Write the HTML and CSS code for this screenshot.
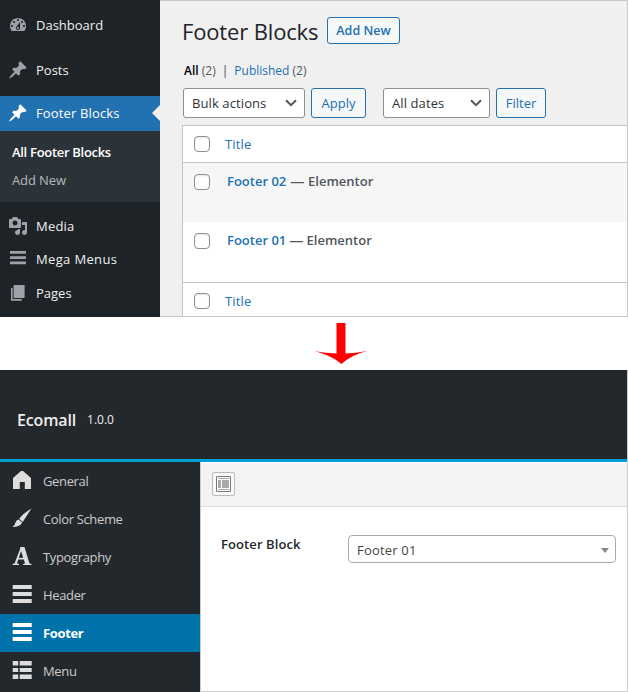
FILE: index.html
```html
<!DOCTYPE html>
<html lang="en">
<head>
<meta charset="utf-8">
<title>Footer Blocks</title>
<link rel="stylesheet" href="styles.css">
</head>
<body>
<svg class="defs" width="0" height="0">
  <symbol id="pin" viewBox="0 0 20 20"><path d="M10.44 3.02l1.82-1.82 6.36 6.35-1.83 1.82c-1.05-.68-2.48-.57-3.41.36l-.75.75c-.92.93-1.04 2.35-.35 3.41l-1.83 1.82-2.41-2.41-2.8 2.79c-.42.42-3.38 2.71-3.8 2.29s1.86-3.39 2.28-3.81l2.79-2.79L4.1 9.36l1.83-1.82c1.05.69 2.48.57 3.4-.36l.75-.75c.93-.92 1.05-2.35.36-3.41z"/></symbol>
  <symbol id="bars" viewBox="0 0 20 20"><path d="M.7 1h19v4h-19zM.7 8h19v4h-19zM.7 15h19v4h-19z"/></symbol>
  <symbol id="chevron" viewBox="0 0 12 8"><path d="M1 1.2l5 5 5-5" fill="none" stroke="#555" stroke-width="2"/></symbol>
</svg>

<section class="admin">
  <nav class="side">
    <a class="item dashboard"><svg class="ico" viewBox="0 0 20 20"><path fill-rule="evenodd" d="M3.76 16h12.48c1.1-1.37 1.76-3.11 1.76-5 0-4.42-3.58-8-8-8s-8 3.58-8 8c0 1.89.66 3.63 1.76 5zM10 4c.55 0 1 .45 1 1s-.45 1-1 1-1-.45-1-1 .45-1 1-1zM6 6c.55 0 1 .45 1 1s-.45 1-1 1-1-.45-1-1 .45-1 1-1zm8 0c.55 0 1 .45 1 1s-.45 1-1 1-1-.45-1-1 .45-1 1-1zm-5.37 5.55L12 7v6c0 1.1-.9 2-2 2s-2-.9-2-2c0-.57.24-1.08.63-1.45zM4 10c.55 0 1 .45 1 1s-.45 1-1 1-1-.45-1-1 .45-1 1-1zm12 0c.55 0 1 .45 1 1s-.45 1-1 1-1-.45-1-1 .45-1 1-1zm-5 3c0-.55-.45-1-1-1s-1 .45-1 1 .45 1 1 1 1-.45 1-1z"/></svg><span>Dashboard</span></a>
    <a class="item posts"><svg class="ico"><use href="#pin"/></svg><span>Posts</span></a>
    <a class="item current"><svg class="ico"><use href="#pin"/></svg><span>Footer Blocks</span></a>
    <div class="submenu"><a class="on">All Footer Blocks</a><a>Add New</a></div>
    <a class="item media"><svg class="ico" viewBox="0 0 20 20"><path fill-rule="evenodd" d="M13 11V4c0-.55-.45-1-1-1h-1.67L9 1H5L3.67 3H2c-.55 0-1 .45-1 1v7c0 .55.45 1 1 1h10c.55 0 1-.45 1-1zM7 4.500c1.380 0 2.500 1.120 2.500 2.500S8.380 9.500 7 9.500 4.500 8.380 4.500 7 5.620 4.500 7 4.500zM14 6h5v10.500c0 1.380-1.120 2.500-2.500 2.500S14 17.880 14 16.500s1.120-2.500 2.500-2.500c.17 0 .34.02.5.05V9h-3V6zm-4 8.050V13h2v3.500c0 1.380-1.120 2.500-2.500 2.500S7 17.880 7 16.500 8.120 14 9.500 14c.17 0 .34.02.5.05z"/></svg><span>Media</span></a>
    <a class="item mega"><svg class="ico" viewBox="0 0 20 20"><path d="M2 2h16v2.700H2zM2 7.300h16V10H2zM2 12.500h16v2.700H2z"/></svg><span>Mega Menus</span></a>
    <a class="item pages"><svg class="ico" viewBox="0 0 20 20"><path d="M5.600 15V2h11v13zM4.600 16h9v1.700H3V5h1.600z"/></svg><span>Pages</span></a>
  </nav>
  <main class="content">
    <header class="heading"><h1>Footer Blocks</h1><a class="btn add">Add New</a></header>
    <p class="views"><b>All</b> <i>(2)</i><span class="bar">|</span><a>Published</a> <i>(2)</i></p>
    <div class="filters">
      <div class="select bulk"><span>Bulk actions</span><svg class="chev"><use href="#chevron"/></svg></div>
      <a class="btn apply">Apply</a>
      <div class="select dates"><span>All dates</span><svg class="chev"><use href="#chevron"/></svg></div>
      <a class="btn filter">Filter</a>
    </div>
    <div class="table">
      <div class="row head"><i class="check"></i><a>Title</a></div>
      <div class="row alt"><i class="check"></i><strong><a>Footer 02</a> <span class="dash">—</span> Elementor</strong></div>
      <div class="row last"><i class="check"></i><strong><a>Footer 01</a> <span class="dash">—</span> Elementor</strong></div>
      <div class="row foot"><i class="check"></i><a>Title</a></div>
    </div>
  </main>
</section>

<div class="arrow"><svg width="52" height="41" viewBox="0 0 52 41"><path fill="#f00" d="M21.500 0h9v30.500Q41 30 52 28q-16 4-25.500 13Q16 32 0 28.200q11 1.800 21.500 2.300z"/></svg></div>

<section class="options">
  <header class="brand"><strong>Ecomall</strong><span>1.0.0</span></header>
  <div class="panel">
    <nav class="tabs">
      <a><svg class="tico" viewBox="0 0 20 20"><path d="M9 1h2l8 7v11h-6.200v-7H7.800v7H1V8z"/></svg><span>General</span></a>
      <a><svg class="tico" viewBox="0 0 20 20"><path d="M19.500.5L10.700 14l-3.500-3.200Q11 5.500 19.500.5zM6.600 11.400l3.500 3.200Q8.500 19 .5 19q2.500-2 3-4.500.6-2.600 3.100-3.100z"/></svg><span>Color Scheme</span></a>
      <a><svg class="tico" viewBox="0 0 20 20"><path fill-rule="evenodd" d="M8.300 1h4.200l5 16.500 2 .5v1h-8.300v-1l1.800-.5-1.200-3.900H6.200L5 17.500l2 .5v1H.5v-1l2-.5L7.900 3.500zM6.800 11.700h4.400L9.100 5z"/></svg><span>Typography</span></a>
      <a><svg class="tico"><use href="#bars"/></svg><span>Header</span></a>
      <a class="active"><svg class="tico"><use href="#bars"/></svg><span>Footer</span></a>
      <a><svg class="tico" viewBox="0 0 20 20"><path d="M.7 1h5.500v4.500H.7zM7.700 1h12v4.500h-12zM.7 8h5.500v4H.7zM7.700 8h12v4h-12zM.7 14.500h5.500V19H.7zM7.700 14.500h12V19h-12z"/></svg><span>Menu</span></a>
    </nav>
    <div class="body">
      <div class="toolbar"><div class="expand"><svg width="15" height="16" viewBox="0 0 15 16"><path d="M.5.5h14v15H.5z" fill="#fff" stroke="#777"/><path d="M2 2h11v1H2zM2 4h3v8H2zM6 4h7v8H6zM2 13h11v1H2z" fill="#aaa"/></svg></div></div>
      <div class="field"><label>Footer Block</label><div class="combo"><span>Footer 01</span><i class="tri"></i></div></div>
    </div>
  </div>
</section>
</body>
</html>
```
FILE: styles.css
```css
* { box-sizing: border-box; }
body { margin: 0; width: 628px; height: 692px; overflow: hidden; background: #fff; font: 13px/18px "Open Sans", "Noto Sans", sans-serif; color: #3c434a; }
h1, p { margin: 0; font-weight: 400; }
i { font-style: normal; }
a { color: #2271b1; }
.defs { display: none; }

.admin { display: flex; height: 317px; }
.side { width: 160px; flex: none; background: #1d2327; display: flex; flex-direction: column; }
.item { display: flex; align-items: center; gap: 8px; height: 34px; padding-left: 8px; color: #f0f0f1; flex: none; }
.ico { width: 20px; height: 20px; fill: #9ca2a7; flex: none; }
.dashboard { margin-top: 8px; }
.posts { margin-top: 11px; }
.current { position: relative; margin-top: 9px; height: 35px; padding-bottom: 1px; background: #2271b1; color: #fff; letter-spacing: .15px; }
.current .ico { fill: #fff; }
.current::after { content: ""; position: absolute; right: 0; top: 9px; border: 8px solid transparent; border-right-color: #f0f0f1; border-left: 0; }
.submenu { height: 71px; background: #2c3338; padding: 7px 12px; display: flex; flex-direction: column; }
.submenu a { line-height: 28px; color: #b5b9bd; letter-spacing: -.1px; }
.submenu .on { color: #fff; font-weight: 600; letter-spacing: -.3px; }
.media { margin-top: 7px; letter-spacing: .2px; }
.mega { height: 32px; letter-spacing: .35px; }
.pages { margin-top: 1px; }

.content { flex: 1; min-width: 0; background: #f0f0f1; border: solid #c8c8c9; border-width: 1px 1px 1px 0; padding: 16px 0 0 22px; display: flex; flex-direction: column; }
.heading { display: flex; height: 28px; gap: 9px; }
h1 { font-size: 22px; line-height: 28px; letter-spacing: -.15px; color: #1d2327; width: 136px; white-space: nowrap; }
.btn { display: flex; align-items: center; justify-content: center; border: 1px solid #2271b1; border-radius: 3px; background: #f6f7f7; height: 30px; }
.add { width: 73px; height: 27px; padding-top: 1px; font-weight: 600; font-size: 12.500px; }
.views { margin: 17px 0 0 2px; height: 18px; font-size: 12px; white-space: nowrap; }
.views b { color: #000; font-weight: 600; }
.views i { color: #50575e; }
.bar { margin: 0 6px; }
.filters { display: flex; margin: 8px 0 7px 1px; }
.select { display: flex; align-items: center; justify-content: space-between; height: 30px; padding: 0 7px 0 8px; border: 1px solid #8c8f94; border-radius: 3px; background: #fff; color: #2c3338; letter-spacing: .1px; }
.chev { width: 12px; height: 8px; }
.bulk { width: 122px; }
.apply { width: 55px; margin: 0 17px 0 6px; }
.dates { width: 107px; }
.filter { width: 50px; margin-left: 6px; }
.table { flex: 1; border: solid #c3c4c7; border-width: 1px 0 0 1px; background: #fff; }
.row { display: flex; padding-left: 11px; }
.check { width: 16px; height: 16px; border: 1px solid #8c8f94; border-radius: 4px; background: #fff; margin: 10px 15px 0 0; flex: none; box-shadow: inset 0 1px 2px rgba(0,0,0,.1); }
.head { height: 37px; border-bottom: 1px solid #c3c4c7; }
.row > a { padding-top: 9px; letter-spacing: .15px; }
.alt { height: 59px; background: #f6f6f7; }
.last { height: 60px; }
.row strong { padding: 9px 0 0 2px; font-weight: 600; color: #50575e; }
.dash { display: inline-block; transform: scaleX(1.1); margin: 0 1px; }
.last .dash { margin: 0 .5px 0 0; }
.alt .check, .last .check { margin-top: 11px; }
.foot { border-top: 1px solid #c3c4c7; }

.arrow { height: 53px; padding: 6px 0 0 315px; }

.options { height: 322px; border-right: 1px solid #ccc; }
.brand { height: 92px; display: flex; align-items: center; gap: 11px; background: #23282d; border-bottom: 3px solid #00a0d2; padding: 11px 0 0 17px; color: #eee; }
.brand strong { font-size: 16px; font-weight: 600; letter-spacing: -.15px; }
.brand span { font-size: 12px; }
.panel { display: flex; height: 230px; }
.tabs { width: 200px; background: #23282d; }
.tabs a { display: flex; height: 38px; align-items: center; gap: 11px; padding-left: 12px; color: #ccc; letter-spacing: -.35px; }
.tabs .active { background: #0073aa; color: #fff; font-weight: 700; }
.tico { width: 20px; height: 20px; margin-bottom: 2px; fill: #ddd; }
.active .tico { fill: #fff; }
.body { flex: 1; border: solid #ccc; border-width: 0 0 1px 1px; }
.toolbar { height: 45px; border-bottom: 1px solid #dedede; background: #f3f3f3; box-shadow: inset 0 1px #fff; padding: 10px 0 0 11px; }
.expand { width: 23px; height: 24px; border: 1px solid #bbb; border-radius: 2px; background: #fafafa; display: flex; align-items: center; justify-content: center; }
.field { display: flex; padding: 28px 11px 0 20px; }
.field label { width: 127px; font-weight: 600; color: #23282d; letter-spacing: .1px; }
.combo { flex: 1; height: 28px; border: 1px solid #aaa; border-radius: 4px; display: flex; align-items: center; justify-content: space-between; padding: 2px 6px 0 8px; color: #444; letter-spacing: .2px; }
.tri { border: solid transparent; border-width: 5px 4px 0; border-top-color: #888; }
```
